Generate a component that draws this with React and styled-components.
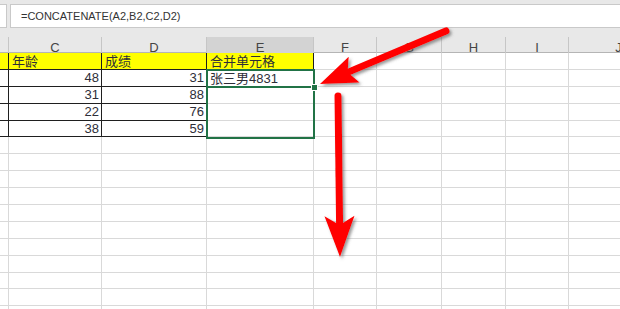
import React from 'react'
import styled, {createGlobalStyle} from "styled-components"

const GlobalStyle = createGlobalStyle`
    html, body {
        margin: 0;
        padding: 0;
        background: #ffffff;
    }
    body {
        width: 620px;
        height: 309px;
        overflow: hidden;
        font-family: "Liberation Sans", "Noto Sans CJK SC", sans-serif;
    }
`

const COLUMNS = [
    {key: 'B', width: 9},
    {key: 'C', width: 93},
    {key: 'D', width: 105},
    {key: 'E', width: 107},
    {key: 'F', width: 63},
    {key: 'G', width: 65},
    {key: 'H', width: 64},
    {key: 'I', width: 63},
    {key: 'J', width: 100},
]

const TEMPLATE = COLUMNS.map(c => `${c.width}px`).join(' ')
const ROW_HEIGHT = 16.9

const ROWS = [
    {head: true, cells: {C: '年龄', D: '成绩', E: '合并单元格'}},
    {cells: {C: '48', D: '31', E: '张三男4831'}},
    {cells: {C: '31', D: '88'}},
    {cells: {C: '22', D: '76'}},
    {cells: {C: '38', D: '59'}},
    ...Array.from({length: 11}, () => ({cells: {}})),
]

const Page = styled.div`
    position: relative;
    width: 620px;
    height: 309px;
    overflow: hidden;
    background: #e8e8e8;
`

const FormulaBar = styled.div`
    display: flex;
    height: 24px;
    padding-top: 4px;
    gap: 3px;
`

const NameBox = styled.div`
    width: 6px;
    background: #ffffff;
    border-right: 1px solid #c9c9c9;
    border-top: 1px solid #c9c9c9;
    border-bottom: 1px solid #c9c9c9;
`

const FormulaInput = styled.div`
    flex: 1;
    display: flex;
    align-items: center;
    padding-left: 10px;
    background: #ffffff;
    border: 1px solid #c9c9c9;
    border-right: none;
    font-size: 11px;
    color: #333333;
`

const HeaderGap = styled.div`
    height: 9px;
`

const ColumnHeaders = styled.div`
    display: grid;
    grid-template-columns: ${TEMPLATE};
    height: 16px;
    border-bottom: 1px solid #b5b5b5;
    box-sizing: border-box;
`

const ColumnHeader = styled.div`
    display: flex;
    align-items: center;
    justify-content: center;
    padding-top: 3px;
    box-sizing: border-box;
    border-right: 1px solid #c6c6c6;
    font-size: 13px;
    color: #444444;
    background: ${({active}) => (active ? "#d3d3d3" : "transparent")};
    box-shadow: ${({active}) => (active ? "inset 0 -2px 0 #217346" : "none")};
`

const Sheet = styled.div`
    position: relative;
    display: grid;
    grid-template-columns: ${TEMPLATE};
    grid-auto-rows: ${ROW_HEIGHT}px;
    background: #ffffff;
`

const Cell = styled.div`
    display: flex;
    align-items: center;
    justify-content: ${({num}) => (num ? "flex-end" : "flex-start")};
    padding: 0 ${({num}) => (num ? "2px" : "0")} 0 ${({num}) => (num ? "0" : "3px")};
    box-sizing: border-box;
    overflow: hidden;
    white-space: nowrap;
    font-size: 13px;
    color: #2e2e38;
    background: ${({fill}) => fill || "#ffffff"};
    border-right: 1px solid ${({boxed}) => (boxed ? "#1f1f1f" : "#d9d9d9")};
    border-bottom: 1px solid ${({boxed}) => (boxed ? "#1f1f1f" : "#d9d9d9")};
`

const Selection = styled.div`
    position: absolute;
    left: 206px;
    top: 16px;
    width: 109px;
    height: 70px;
    box-sizing: border-box;
    border: 2px solid #217346;
    pointer-events: none;
`

const ActiveLine = styled.div`
    position: absolute;
    left: 206px;
    top: 33px;
    width: 108px;
    height: 2px;
    background: #217346;
`

const FillHandle = styled.div`
    position: absolute;
    left: 311px;
    top: 31px;
    width: 5px;
    height: 5px;
    background: #217346;
    border: 1px solid #ffffff;
`

const Arrows = styled.svg`
    position: absolute;
    left: 0;
    top: 0;
    width: 620px;
    height: 309px;
    pointer-events: none;
`

function Arrow({tail, tip, back, half, neck}) {
    // direction from tip back toward tail
    const dx = tail[0] - tip[0]
    const dy = tail[1] - tip[1]
    const len = Math.hypot(dx, dy)
    const bx = dx / len, by = dy / len
    const nx = -by, ny = bx
    const at = (a, w) => `${tip[0] + a * bx + w * nx},${tip[1] + a * by + w * ny}`
    const neckPt = [tip[0] + neck * bx, tip[1] + neck * by]
    return (
        <g filter="url(#shadow)">
            <line x1={tail[0]} y1={tail[1]} x2={neckPt[0]} y2={neckPt[1]}
                  stroke="#ff0000" strokeWidth="7" strokeLinecap="round"/>
            <polygon points={`${at(0, 0)} ${at(back, -half)} ${at(neck, 0)} ${at(back, half)}`}
                     fill="#ff0000"/>
        </g>
    )
}

function App() {
    return (
        <>
            <GlobalStyle/>
            <Page>
                <FormulaBar>
                    <NameBox/>
                    <FormulaInput>=CONCATENATE(A2,B2,C2,D2)</FormulaInput>
                </FormulaBar>
                <HeaderGap/>
                <ColumnHeaders>
                    {COLUMNS.map(c => (
                        <ColumnHeader key={c.key} active={c.key === 'E'}>
                            {c.key === 'B' ? '' : c.key}
                        </ColumnHeader>
                    ))}
                </ColumnHeaders>
                <Sheet>
                    {ROWS.map((row, r) => COLUMNS.map(c => {
                        const value = row.cells[c.key]
                        const inTable = r < 5 && ['B', 'C', 'D'].includes(c.key)
                        const boxed = inTable || (row.head && c.key === 'E')
                        const fill = row.head && c.key <= 'E' ? "#ffff00" : null
                        const num = value && /^\d+$/.test(value)
                        return (
                            <Cell key={`${r}-${c.key}`} boxed={boxed} fill={fill} num={num}>
                                {value}
                            </Cell>
                        )
                    }))}
                    <Selection/>
                    <ActiveLine/>
                    <FillHandle/>
                </Sheet>
                <Arrows viewBox="0 0 620 309">
                    <defs>
                        <filter id="shadow" x="-20%" y="-20%" width="140%" height="140%">
                            <feDropShadow dx="2" dy="2" stdDeviation="1.6" floodColor="#555555" floodOpacity="0.6"/>
                        </filter>
                    </defs>
                    <Arrow tail={[446, 31]} tip={[320, 84]} back={37} half={14} neck={30}/>
                    <Arrow tail={[338, 96]} tip={[340, 257]} back={41} half={15} neck={32}/>
                </Arrows>
            </Page>
        </>
    )
}

export default App
